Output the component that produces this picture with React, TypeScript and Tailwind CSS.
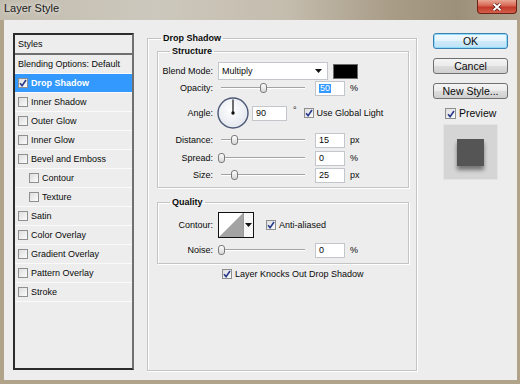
import clsx from 'clsx';
import type { ReactNode } from 'react';

// left list of layer effects
const effects = [
  { name: 'Drop Shadow', on: true, active: true },
  { name: 'Inner Shadow' },
  { name: 'Outer Glow' },
  { name: 'Inner Glow' },
  { name: 'Bevel and Emboss' },
  { name: 'Contour', sub: true },
  { name: 'Texture', sub: true },
  { name: 'Satin' },
  { name: 'Color Overlay' },
  { name: 'Gradient Overlay' },
  { name: 'Pattern Overlay' },
  { name: 'Stroke' },
];

const etched = 'border border-[#c4c4c4] shadow-[inset_1px_1px_0_#ffffff,1px_1px_0_#ffffff]';

function Check({ on, big }: { on?: boolean; big?: boolean }) {
  return (
    <span
      className={clsx(
        'flex shrink-0 items-center justify-center border border-[#8e8f8f] bg-linear-to-br from-[#dedede] to-[#fbfbfb]',
        big ? 'h-[11px] w-[11px]' : 'h-[10px] w-[10px]'
      )}
    >
      {on && (
        <svg viewBox="0 0 8 8" className="h-[8px] w-[8px]">
          <path d="M1 4.2 L3.1 6.6 L7 1" fill="none" stroke="#26398c" strokeWidth={1.6} />
        </svg>
      )}
    </span>
  );
}

function Slider({ at }: { at: number }) {
  return (
    <div className="relative flex h-[16px] w-[90px] shrink-0 items-center px-[3px]">
      <div className="h-[2px] w-full border-t border-[#a3a3a3] bg-white" />
      <span
        className="absolute top-[3px] h-[10px] w-[7px] rounded-[3px] border border-[#7b7b7b] bg-linear-to-b from-[#fdfdfd] to-[#d6d6d6]"
        style={{ left: at }}
      />
    </div>
  );
}

function Field({ value, sel, className }: { value: string; sel?: boolean; className?: string }) {
  return (
    <div className={clsx('flex h-[15px] shrink-0 items-center border border-[#c3c7cc] bg-white pl-[3px]', className)}>
      <span className={clsx(sel && 'bg-[#3399ff] px-px text-white')}>{value}</span>
    </div>
  );
}

function Row({ label, className, children }: { label: string; className?: string; children: ReactNode }) {
  return (
    <div className={clsx('flex items-center', className)}>
      <span className="w-[60px] shrink-0 pr-[5px] text-right">{label}</span>
      {children}
    </div>
  );
}

function Arrow() {
  return (
    <svg width="7" height="4" viewBox="0 0 7 4">
      <polygon points="0,0 7,0 3.5,4" fill="#111" />
    </svg>
  );
}

function Button({ children, main }: { children: ReactNode; main?: boolean }) {
  return (
    <button
      className={clsx(
        'flex h-[16px] w-[75px] items-center justify-center rounded-[3px] border text-[10.5px] leading-none',
        main
          ? 'border-[#3c7fb1] bg-[linear-gradient(#f1f9fe_0%,#e3f3fc_50%,#cfeafa_50%,#bde2f7_100%)] shadow-[inset_0_0_0_1px_#8fdcfa]'
          : 'border-[#707070] bg-[linear-gradient(#f4f4f4_0%,#ebebeb_50%,#dddddd_50%,#cfcfcf_100%)]'
      )}
    >
      {children}
    </button>
  );
}

export default function App() {
  return (
    <div className="h-[384px] w-[520px] overflow-hidden bg-[#b1a38a] text-[#0a0a0a] [font-family:'Liberation_Sans',Arial,sans-serif]">
      {/* title bar */}
      <div className="flex h-[20px] items-start justify-between bg-[linear-gradient(90deg,#c3bdb0_0%,#cdc8bd_30%,#c4bcad_55%,#a99d88_75%,#9d907a_88%,#b0a48e_100%)]">
        <span className="ml-[4px] mt-[1px] text-[11px] leading-[14px] text-[#1b1b1b] [text-shadow:0_0_5px_rgba(255,255,255,0.9)]">
          Layer Style
        </span>
        <button className="mr-[3px] flex h-[14px] w-[40px] items-center justify-center rounded-b-[4px] border border-t-0 border-[#6b2317] bg-[linear-gradient(#e8a796_0%,#d6644f_45%,#c2392a_55%,#d3604b_100%)]">
          <svg width="10" height="8" viewBox="0 0 10 8">
            <path d="M1.5 0.8 L8.5 7.2 M8.5 0.8 L1.5 7.2" stroke="#4a1008" strokeWidth={3.2} />
            <path d="M1.5 0.8 L8.5 7.2 M8.5 0.8 L1.5 7.2" stroke="#ffffff" strokeWidth={1.9} />
          </svg>
        </button>
      </div>

      {/* dialog body */}
      <div className="ml-[4px] mr-[3px] flex h-[360px] items-start bg-[#ededed] pl-[9px] pt-[12px] text-[9px] leading-none">
        {/* styles list */}
        <div className="mt-[1px] h-[337px] w-[121px] shrink-0 border-2 border-[#2c2c2c] border-r-[#707070]">
          <div className="flex h-[20px] items-center border-b-2 border-[#6f6f6f] pl-[3px]">Styles</div>
          <div className="flex h-[19px] items-center border-b border-[#fafafa] pl-[3px]">Blending Options: Default</div>
          {effects.map((e) => (
            <div
              key={e.name}
              className={clsx(
                'flex h-[19px] items-center gap-[3px] border-b border-[#fafafa]',
                e.sub ? 'pl-[14px]' : 'pl-[3px]',
                e.active && 'bg-[#3399ff] font-bold text-white'
              )}
            >
              <Check on={e.on} />
              <span>{e.name}</span>
            </div>
          ))}
        </div>

        {/* Drop Shadow settings */}
        <fieldset className={clsx('ml-[13px] h-[339px] w-[270px] shrink-0', etched)}>
          <legend className="ml-[13px] px-[2px] text-[9px] font-bold leading-[12px]">Drop Shadow</legend>
          <div className="flex flex-col pl-[9px] pr-[7px]">
            <fieldset className={clsx('mt-[1px] w-[252px] pb-[4px]', etched)}>
              <legend className="ml-[12px] px-[2px] text-[9px] font-bold leading-[12px]">Structure</legend>
              <Row label="Blend Mode:" className="mt-[5px] h-[18px]">
                <div className="flex h-[18px] w-[110px] items-center justify-between border border-[#c3c7cc] bg-white pl-[3px] pr-[5px]">
                  <span>Multiply</span>
                  <Arrow />
                </div>
                <span className="ml-[5px] h-[15px] w-[25px] border border-[#6b6b6b] bg-black" />
              </Row>
              <Row label="Opacity:" className="h-[16px]">
                <Slider at={42} />
                <Field value="50" sel className="ml-[7px] w-[30px]" />
                <span className="ml-[5px]">%</span>
              </Row>
              <Row label="Angle:" className="mt-[1px] h-[32px]">
                <svg width="32" height="32" viewBox="0 0 32 32" className="-ml-px shrink-0">
                  <defs>
                    <radialGradient id="dial" cx="0.45" cy="0.4" r="0.6">
                      <stop offset="0" stopColor="#ffffff" />
                      <stop offset="1" stopColor="#e3e8ef" />
                    </radialGradient>
                  </defs>
                  <circle cx="16" cy="16" r="15" fill="url(#dial)" stroke="#4b5876" strokeWidth="1.4" />
                  <line x1="16" y1="16" x2="16" y2="2.5" stroke="#111" strokeWidth="1.2" />
                  <circle cx="16" cy="16" r="1.7" fill="#111" />
                </svg>
                <Field value="90" className="ml-[3px] w-[35px]" />
                <span className="ml-[6px] self-start pt-[9px]">°</span>
                <span className="ml-[7px]">
                  <Check on />
                </span>
                <span className="ml-[3px]">Use Global Light</span>
              </Row>
              <Row label="Distance:" className="mt-[3px] h-[16px]">
                <Slider at={13} />
                <Field value="15" className="ml-[7px] w-[30px]" />
                <span className="ml-[5px]">px</span>
              </Row>
              <Row label="Spread:" className="mt-[2px] h-[16px]">
                <Slider at={0} />
                <Field value="0" className="ml-[7px] w-[30px]" />
                <span className="ml-[5px]">%</span>
              </Row>
              <Row label="Size:" className="mt-px h-[16px]">
                <Slider at={13} />
                <Field value="25" className="ml-[7px] w-[30px]" />
                <span className="ml-[5px]">px</span>
              </Row>
            </fieldset>

            <fieldset className={clsx('mt-[8px] w-[252px] pb-[5px]', etched)}>
              <legend className="ml-[12px] px-[2px] text-[9px] font-bold leading-[12px]">Quality</legend>
              <Row label="Contour:" className="mt-[4px] h-[26px]">
                <div className="flex h-[26px] w-[36px] border border-[#111] bg-white">
                  <svg width="24" height="24" viewBox="0 0 24 24">
                    <polygon points="0,24 24,0 24,24" fill="#a3a3a3" />
                  </svg>
                  <div className="flex w-[10px] items-center justify-center border-l border-[#9a9a9a] bg-[#f6f6f6]">
                    <Arrow />
                  </div>
                </div>
                <span className="ml-[12px]">
                  <Check on />
                </span>
                <span className="ml-[3px]">Anti-aliased</span>
              </Row>
              <Row label="Noise:" className="mt-[4px] h-[16px]">
                <Slider at={0} />
                <Field value="0" className="ml-[7px] w-[30px]" />
                <span className="ml-[5px]">%</span>
              </Row>
            </fieldset>

            <div className="ml-[65px] mt-[3px] flex h-[14px] items-center gap-[3px]">
              <Check on />
              <span>Layer Knocks Out Drop Shadow</span>
            </div>
          </div>
        </fieldset>

        {/* buttons + preview */}
        <div className="ml-[16px] mt-[1px] flex w-[75px] shrink-0 flex-col">
          <Button main>OK</Button>
          <div className="mt-[9px]">
            <Button>Cancel</Button>
          </div>
          <div className="mt-[9px]">
            <Button>New Style...</Button>
          </div>
          <div className="ml-[12px] mt-[9px] flex h-[11px] items-center gap-[3px] text-[10.5px]">
            <Check on big />
            <span>Preview</span>
          </div>
          <div className="ml-[10px] mt-[5px] flex h-[56px] w-[55px] items-center justify-center border border-[#e4e4e4] bg-[#d5d5d5]">
            <div className="h-[27px] w-[27px] bg-[#555555] shadow-[0_4px_4px_rgba(0,0,0,0.45)]" />
          </div>
        </div>
      </div>
    </div>
  );
}
